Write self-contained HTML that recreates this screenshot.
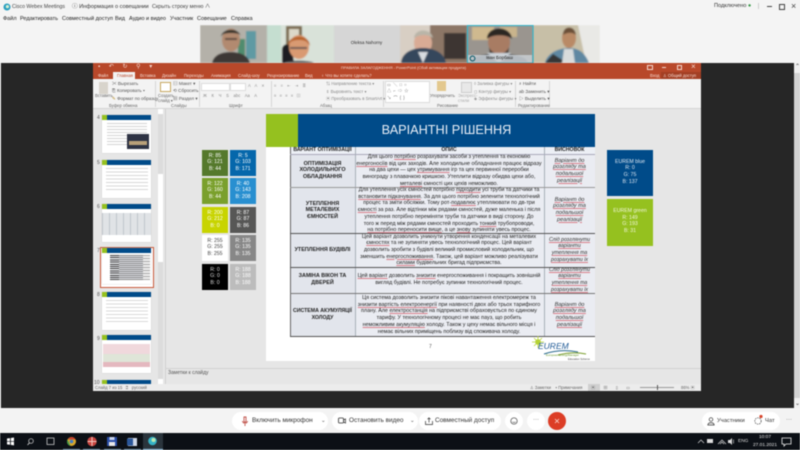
<!DOCTYPE html>
<html lang="ru"><head><meta charset="utf-8"><title>Cisco Webex Meetings</title>
<style>
html,body{margin:0;padding:0;width:800px;height:450px;overflow:hidden;background:#f4f4f4}
#w{position:relative;width:800px;height:450px;overflow:hidden;font-family:"Liberation Sans","Noto Sans CJK SC",sans-serif;filter:blur(.4px);color:#222}
#w div,#w svg{position:absolute}
.t{white-space:nowrap}
.m{white-space:nowrap;top:15px;font-size:5.5px;line-height:8px;color:#222}
.r{font-size:4.2px;color:#fff;white-space:nowrap}
.rb{font-size:4.6px;color:#555;white-space:nowrap}
.rl{font-size:4.2px;color:#666;white-space:nowrap}
.sep{width:1px;top:81px;height:26px;background:#d6d6d6}
.sw{width:26px;height:25.5px;color:#fff;font-size:5.2px;line-height:6.6px;text-align:center;padding-top:0}
.sw span{display:block;margin-top:2.5px}
.c{text-align:center;font-size:5.4px;line-height:6.7px;color:#222;white-space:nowrap}
.c u,.v u{text-decoration:underline;text-decoration-color:#d9808c;text-decoration-thickness:.5px}
.v{text-align:center;font-size:5.6px;line-height:6.7px;font-style:italic;color:#333;white-space:nowrap}
.h{text-align:center;font-size:5.4px;line-height:6.6px;font-weight:bold;color:#222;white-space:nowrap}
.th{background:#fff;width:49px;height:38px;box-shadow:0 0 1px #bbb}
.thn{font-size:5px;color:#555}
.pill{background:#fff;border-radius:10px;height:18px;top:412px}
</style></head><body><div id="w">

<!-- top bar -->
<div style="left:0;top:0;width:800px;height:63px;background:#f4f4f4"></div>
<svg style="left:3px;top:3px" width="8" height="8" viewBox="0 0 10 10"><circle cx="5" cy="5" r="4.4" fill="#2a9fc0"/><circle cx="5.5" cy="4.5" r="2" fill="#d9f0d0"/></svg>
<div class="t" style="left:12px;top:2.5px;font-size:5.2px;color:#444;line-height:8px">Cisco Webex Meetings</div>
<div class="t" style="left:72px;top:2.5px;font-size:5.6px;color:#333;line-height:8px">ⓘ Информация о совещании</div>
<div class="t" style="left:152px;top:2.5px;font-size:5.4px;color:#444;line-height:8px">Скрыть строку меню ∧</div>
<div class="m" style="left:3px">Файл</div>
<div class="m" style="left:20px">Редактировать</div>
<div class="m" style="left:62px">Совместный доступ</div>
<div class="m" style="left:115px">Вид</div>
<div class="m" style="left:129px">Аудио и видео</div>
<div class="m" style="left:170px">Участник</div>
<div class="m" style="left:197px">Совещание</div>
<div class="m" style="left:231px">Справка</div>
<div class="t" style="left:714px;top:2px;font-size:5.6px;color:#333;line-height:8px">Подключено <span style="color:#3a9a4a">●</span></div>
<div style="left:758px;top:3px;width:1px;height:6px;background:#ccc"></div>
<div style="left:767px;top:6px;width:5px;height:1px;background:#444"></div>
<div style="left:779px;top:4px;width:4px;height:4px;border:1px solid #444"></div>
<div class="t" style="left:791px;top:1px;font-size:9px;color:#444;line-height:10px">×</div>

<!-- videos -->
<svg style="left:200px;top:25px" width="400" height="38" viewBox="0 0 400 38">
<defs><filter id="b"><feGaussianBlur stdDeviation="0.8"/></filter></defs>
<g filter="url(#b)">
<rect x="0" width="67" height="38" fill="#b4b1a9"/>
<rect x="46" y="6" width="10" height="28" fill="#5f9aa3"/><rect x="38" y="14" width="7" height="20" fill="#4f8c6e"/>
<ellipse cx="31" cy="15" rx="9" ry="11.5" fill="#b28a70"/><path d="M21 12c0-9 19-10 20 0 0-3-3-4-10-4s-9 1-10 4z" fill="#33302c"/>
<rect x="25" y="13" width="12" height="2" fill="#5b4a40"/>
<path d="M12 38c2-9 11-11 19-11s17 3 19 11z" fill="#3d3835"/>
<rect x="67" width="67" height="38" fill="#d9e2d9"/><rect x="67" width="14" height="38" fill="#c5ded0"/>
<rect x="86" y="1" width="16" height="19" fill="#7a6a50"/><rect x="89" y="4" width="10" height="13" fill="#dcd8c8"/>
<path d="M82 38v-14c1-6 8-6 10-2l2 16z" fill="#1e1e20"/>
<ellipse cx="99" cy="22" rx="10" ry="12" fill="#d99a72"/><path d="M88 21c-1-11 21-14 22 0-3-5-5-6-11-6s-9 1-11 6z" fill="#b8642c"/>
<rect x="90" y="22" width="17" height="2" fill="#6a5a55"/>
<path d="M84 38c2-3 28-3 30 0z" fill="#555"/>
<rect x="134" width="66" height="38" fill="#d6d6d6"/>
<rect x="200" width="67" height="38" fill="#8c7666"/><rect x="200" width="30" height="38" fill="#d8cfc4"/>
<rect x="244" y="8" width="22" height="26" fill="#3e3530"/>
<ellipse cx="223" cy="18" rx="9" ry="11" fill="#d9ab95"/><path d="M214 13c1-10 17-10 19 0-5-4-13-4-19 0z" fill="#b9b5a8"/>
<path d="M201 38c1-12 14-15 22-15s21 3 23 15z" fill="#36465c"/><path d="M218 27l5 11 5-11z" fill="#d8dce0"/>
<rect x="267" width="66" height="38" fill="#9a958f"/><rect x="272" y="2" width="22" height="13" fill="#cfb98f"/><rect x="300" y="2" width="17" height="10" fill="#c9b48c"/>
<ellipse cx="299" cy="17" rx="11" ry="13" fill="#a87b63"/><path d="M287 14c0-14 24-14 25 0-5-5-20-5-25 0z" fill="#2a2622"/><path d="M289 22c3 9 17 9 20 0l-1 8h-18z" fill="#3a2e28"/>
<path d="M270 38c1-7 14-9 29-9s28 2 29 9z" fill="#3c4a58"/><path d="M287 28l12 10 12-10z" fill="#ced5dc"/>
<rect x="333" width="67" height="38" fill="#c7bfa7"/><path d="M378 0h22v38h-14z" fill="#e9e9e6"/>
<ellipse cx="369" cy="13" rx="7" ry="10" fill="#b98a66"/><path d="M363 10c0-10 12-10 13 0-3-3-9-3-13 0z" fill="#6a5038"/>
<path d="M345 38c2-10 14-15 24-15s16 5 20 15z" fill="#5e88a2"/><path d="M345 38l8-9 14 9z" fill="#343434"/><path d="M364 24h9l2 14h-13z" fill="#d8dcdc"/>
</g>
<rect x="267.500" y=".5" width="65.500" height="37" fill="none" stroke="#3bb4c8" stroke-width="1.200"/>
<rect x="268" y="30" width="64" height="7.500" fill="#c9cfd3" opacity=".85"/>
</svg>
<div class="t" style="left:333px;top:40px;width:67px;text-align:center;font-size:4.400px;color:#333;line-height:6px">Oleksa Nahorny</div>
<div class="t" style="left:486px;top:55px;font-size:4.600px;color:#222;line-height:6px">Іван Борбаш</div>
<svg style="left:469px;top:55px" width="8" height="7" viewBox="0 0 8 7"><circle cx="3.500" cy="3.500" r="2.400" fill="none" stroke="#14606e" stroke-width="1.100"/></svg>

<!-- dark share area -->
<div style="left:0;top:63px;width:800px;height:345px;background:#262626"></div>
<div style="left:0;top:63px;width:1px;height:345px;background:#e8e8e8"></div>
<div style="left:794px;top:63px;width:6px;height:345px;background:#2c2c2c"></div>
<div style="left:794px;top:73px;width:6px;height:325px;background:#d2d2d2"></div>
<div style="left:794px;top:63px;width:6px;height:10px;background:#efefef"></div>
<div style="left:794px;top:398px;width:6px;height:10px;background:#efefef"></div>
<div class="t" style="left:795px;top:63px;font-size:6px;color:#444;line-height:8px">⌃</div>
<div class="t" style="left:795px;top:401px;font-size:6px;color:#444;line-height:6px">⌄</div>

<!-- PPT window -->
<div style="left:93px;top:63px;width:608px;height:328px;background:#e6e6e6"></div>
<div style="left:93px;top:63px;width:608px;height:16px;background:#b8482a"></div>
<div class="t" style="left:98px;top:63px;font-size:6px;color:#f3d5cb;line-height:8px;word-spacing:7px">▪ ↶ ↻ ⚲ ▾</div>
<div class="t" style="left:341px;top:63.500px;font-size:3.900px;color:#f3d5cb;line-height:7px">ПРАВИЛА ЗАЛАГОДЖЕННЯ - PowerPoint (Сбой активации продукта)</div>
<div style="left:647px;top:65px;width:4px;height:3px;border:1px solid #f3d5cb"></div>
<div style="left:662px;top:67px;width:4px;height:1px;background:#f3d5cb"></div>
<div style="left:677px;top:65px;width:3px;height:3px;border:1px solid #f3d5cb"></div>
<div class="t" style="left:691px;top:62px;font-size:8px;color:#f3d5cb;line-height:9px">×</div>
<div style="left:661px;top:72px;width:40px;height:7px;background:#a33f24"></div>
<div style="left:113px;top:72px;width:22px;height:8px;background:#f3f3f3"></div>
<div class="t r" style="left:98px;top:72.500px;line-height:6px;color:#f6ddd4">Файл</div>
<div class="t r" style="left:117px;top:72.500px;line-height:6px;color:#b8482a">Главная</div>
<div class="t r" style="left:140px;top:72.500px;line-height:6px;color:#f6ddd4">Вставка</div>
<div class="t r" style="left:162px;top:72.500px;line-height:6px;color:#f6ddd4">Дизайн</div>
<div class="t r" style="left:184px;top:72.500px;line-height:6px;color:#f6ddd4">Переходы</div>
<div class="t r" style="left:211px;top:72.500px;line-height:6px;color:#f6ddd4">Анимация</div>
<div class="t r" style="left:238px;top:72.500px;line-height:6px;color:#f6ddd4">Слайд-шоу</div>
<div class="t r" style="left:267px;top:72.500px;line-height:6px;color:#f6ddd4">Рецензирование</div>
<div class="t r" style="left:305px;top:72.500px;line-height:6px;color:#f6ddd4">Вид</div>
<div class="t r" style="left:321px;top:72.500px;line-height:6px;color:#f6ddd4">♀ Что вы хотите сделать?</div>
<div class="t r" style="left:650px;top:72.500px;line-height:6px;color:#f6ddd4">Вход</div>
<div class="t r" style="left:663px;top:72.500px;line-height:6px;color:#f6ddd4">♙ Общий доступ</div>

<!-- ribbon -->
<div style="left:93px;top:79px;width:608px;height:29px;background:#f3f3f3"></div>
<div style="left:93px;top:108px;width:608px;height:1px;background:#d4d4d4"></div>
<div style="left:155px;" class="sep"></div><div style="left:199px;" class="sep"></div><div style="left:271px;" class="sep"></div><div style="left:383px;" class="sep"></div><div style="left:515px;" class="sep"></div><div style="left:549px;" class="sep"></div>
<div style="left:99px;top:82px;width:9px;height:12px;background:#d8d4cc"></div>
<div class="rl" style="left:95px;top:93px;line-height:5px">Вставить</div>
<div class="rb" style="left:112px;top:81px;line-height:6px">✂ Вырезать</div>
<div class="rb" style="left:112px;top:88px;line-height:6px">⎘ Копировать ▾</div>
<div class="rb" style="left:112px;top:96px;line-height:6px"><span style="color:#b58a20">✎</span> Формат по образцу</div>
<div class="rl" style="left:109px;top:103px;line-height:5px">Буфер обмена</div>
<div style="left:160px;top:82px;width:9px;height:8px;background:#fff;border:1px solid #c9a860"></div>
<div class="rl" style="left:158px;top:93px;line-height:5px">Создать<br>слайд ▾</div>
<div class="rb" style="left:173px;top:81px;line-height:6px">▤ Макет ▾</div>
<div class="rb" style="left:173px;top:88px;line-height:6px">⟲ Сбросить</div>
<div class="rb" style="left:173px;top:96px;line-height:6px">▦ Раздел ▾</div>
<div class="rl" style="left:171px;top:103px;line-height:5px">Слайды</div>
<div style="left:201px;top:82.500px;width:27px;height:6px;background:#fff;border:1px solid #ddd"></div>
<div style="left:230px;top:82.500px;width:14px;height:6px;background:#fff;border:1px solid #ddd"></div>
<div class="rl" style="left:248px;top:83px;line-height:5px;color:#999;word-spacing:3px">A A ✕</div>
<div class="rl" style="left:203px;top:93px;line-height:5px;color:#888;word-spacing:3.500px">Ж К Ч S abc Aa A</div>
<div class="rl" style="left:229px;top:103px;line-height:5px">Шрифт</div>
<div class="rl" style="left:274px;top:83px;line-height:5px;color:#999;word-spacing:3px">≡ ≡ ⇤ ⇥ ≣</div>
<div class="rl" style="left:274px;top:93px;line-height:5px;color:#888;word-spacing:2px">≡ ≡ ≡ ≡ ▥</div>
<div class="rl" style="left:326px;top:81px;line-height:6px;color:#888">⇅ Направление текста ▾</div>
<div class="rl" style="left:326px;top:88.500px;line-height:6px;color:#888">⇕ Выровнять текст ▾</div>
<div class="rl" style="left:326px;top:96px;line-height:6px;color:#888">▣ Преобразовать в SmartArt ▾</div>
<div class="rl" style="left:320px;top:103px;line-height:5px">Абзац</div>
<div style="left:385px;top:81px;width:43px;height:20px;background:#fff;border:1px solid #ddd"></div>
<div class="rl" style="left:387px;top:82px;line-height:6.400px;color:#666;word-spacing:1px">▭ ╲ □ ○<br>△ ⌐ ⇨ ☆<br>↘ ⌒ { }</div>
<div style="left:437px;top:81px;width:9px;height:10px;background:#e3c88e"></div>
<div class="rl" style="left:430px;top:93px;line-height:5px">Упорядочить</div>
<div class="rl" style="left:458px;top:93px;line-height:5px;color:#aaa">Экспресс-<br>стили</div>
<div style="left:461px;top:82px;width:9px;height:9px;background:#e8e8e8;border:1px solid #ccc"></div>
<div class="rl" style="left:474px;top:81px;line-height:6px;color:#888">◊ Заливка фигуры ▾</div>
<div class="rl" style="left:474px;top:88.500px;line-height:6px;color:#888">◻ Контур фигуры ▾</div>
<div class="rl" style="left:474px;top:96px;line-height:6px;color:#888">◈ Эффекты фигуры ▾</div>
<div class="rl" style="left:437px;top:103px;line-height:5px">Рисование</div>
<div class="rb" style="left:519px;top:81px;line-height:6px">⌕ Найти</div>
<div class="rb" style="left:519px;top:88.500px;line-height:6px">ab Заменить ▾</div>
<div class="rb" style="left:519px;top:96px;line-height:6px">▷ Выделить ▾</div>
<div class="rl" style="left:518px;top:103px;line-height:5px">Редактирование</div>

<!-- thumbnail pane -->
<div style="left:93px;top:109px;width:72px;height:275px;background:#e6e6e6"></div>
<div style="left:158px;top:109px;width:5px;height:275px;background:#dcdcdc"></div>
<div style="left:158px;top:174px;width:5px;height:88px;background:#fff"></div>
<div style="left:158px;top:109px;width:5px;height:5px;background:#fff"></div>
<div style="left:158px;top:379px;width:5px;height:5px;background:#fff"></div>
<div style="left:164.500px;top:109px;width:1px;height:275px;background:#d0d0d0"></div>

<div class="thn" style="left:97px;top:115px">4</div>
<div class="th" style="left:102px;top:115px"><div style="left:0;top:0;width:5px;height:5px;background:#95c11f"></div><div style="left:5px;top:0;width:44px;height:5px;background:#004b89"></div><div style="left:5px;top:8px;width:40px;height:24px;background:repeating-linear-gradient(#d4d4d4 0 1px,#fff 1px 3px)"></div><div style="left:25px;top:19px;width:22px;height:15px;background:#2e3344"></div><div style="left:27px;top:26px;width:18px;height:4px;background:#b9a079"></div></div>
<div class="thn" style="left:97px;top:160px">5</div>
<div class="th" style="left:102px;top:160px"><div style="left:0;top:0;width:5px;height:5px;background:#95c11f"></div><div style="left:5px;top:0;width:44px;height:5px;background:#004b89"></div><div style="left:4px;top:8px;width:42px;height:24px;background:repeating-linear-gradient(#d8d8d8 0 1px,#fff 1px 3.500px)"></div></div>
<div class="thn" style="left:97px;top:204px">6</div>
<div class="th" style="left:102px;top:204px"><div style="left:0;top:0;width:5px;height:5px;background:#95c11f"></div><div style="left:5px;top:0;width:44px;height:5px;background:#004b89"></div><div style="left:0;top:9px;width:49px;height:22px;background:repeating-linear-gradient(90deg,#c0c6cc 0 1px,#e0e3e6 1px 7px)"></div></div>
<div class="thn" style="left:97px;top:248px">7</div>
<div style="left:100px;top:246.500px;width:52px;height:39px;border:1px solid #c8593a;background:#fff"></div>
<div class="th" style="left:102px;top:248px;height:36px"><div style="left:0;top:0;width:5px;height:5px;background:#95c11f"></div><div style="left:5px;top:0;width:44px;height:5px;background:#004b89"></div><div style="left:8px;top:7px;width:9px;height:25px;background:repeating-linear-gradient(#444 0 1px,#e4e6ea 1px 2.200px)"></div><div style="left:17px;top:7px;width:24px;height:25px;background:repeating-linear-gradient(#888 0 1px,#dfe2e8 1px 2px)"></div><div style="left:41px;top:7px;width:7px;height:25px;background:repeating-linear-gradient(#aaa 0 1px,#eee 1px 3px)"></div></div>
<div class="thn" style="left:97px;top:292px">8</div>
<div class="th" style="left:102px;top:292px"><div style="left:0;top:0;width:5px;height:5px;background:#95c11f"></div><div style="left:5px;top:0;width:44px;height:5px;background:#004b89"></div><div style="left:4px;top:8px;width:42px;height:22px;background:repeating-linear-gradient(#dadada 0 1px,#fff 1px 3.500px)"></div></div>
<div class="thn" style="left:97px;top:336px">9</div>
<div class="th" style="left:102px;top:335px"><div style="left:0;top:0;width:5px;height:5px;background:#95c11f"></div><div style="left:5px;top:0;width:44px;height:5px;background:#004b89"></div><div style="left:1px;top:9px;width:47px;height:10px;background:#f0d8dc"></div><div style="left:1px;top:19px;width:47px;height:8px;background:#dfe5d8"></div><div style="left:1px;top:27px;width:47px;height:5px;background:#e4b8bf"></div></div>
<div class="thn" style="left:94px;top:380px">10</div>
<div class="th" style="left:102px;top:380px;height:4px"><div style="left:0;top:0;width:5px;height:4px;background:#95c11f"></div><div style="left:5px;top:0;width:44px;height:4px;background:#004b89"></div></div>

<!-- status / notes -->
<div style="left:165px;top:367.500px;width:536px;height:1px;background:#d2d2d2"></div>
<div class="t" style="left:168px;top:370px;font-size:5px;color:#555;line-height:6px">Заметки к слайду</div>
<div style="left:93px;top:384px;width:608px;height:7px;background:#ececec"></div>
<div class="rl" style="left:95px;top:384.500px;line-height:6px">Слайд 7 из 15 &nbsp; ⍰ &nbsp; русский</div>
<div class="rl" style="left:530px;top:384.500px;line-height:6px">♙ Заметки &nbsp;&nbsp; ▪ Примечания</div>
<div style="left:588px;top:384px;width:12px;height:7px;background:#cfcfcf"></div>
<div class="rl" style="left:591px;top:384.500px;line-height:6px;word-spacing:7px">▣ ▦ ▯ ▭</div>
<div style="left:640px;top:387px;width:34px;height:1px;background:#999"></div>
<div style="left:657px;top:385px;width:1px;height:5px;background:#555"></div>
<div class="rl" style="left:681px;top:384.500px;line-height:6px">86% ▣</div>

<!-- slide -->
<div style="left:266px;top:114px;width:329px;height:247px;background:#fff"></div>
<div style="left:266px;top:114px;width:32px;height:33px;background:#95c11f"></div>
<div style="left:298px;top:114px;width:297px;height:33px;background:#004b89"></div>
<div class="t" style="left:298px;top:122px;width:297px;text-align:center;color:#e8eef6;font-size:12.700px;line-height:16px">ВАРІАНТНІ РІШЕННЯ</div>

<!-- table -->
<div style="left:290px;top:147px;width:65px;height:189px;background:#e2e5ec"></div>
<div style="left:355px;top:147px;width:240px;height:189px;background:#eaecf2"></div>
<div style="left:290px;top:147px;width:305px;height:7px;background:#eceff5"></div>
<div style="left:290px;top:147px;width:1px;height:189px;background:#666"></div>
<div style="left:355px;top:147px;width:1px;height:189px;background:#a8b0b8"></div>
<div style="left:543.500px;top:147px;width:1px;height:189px;background:#a8b0b8"></div>
<div style="left:290px;top:153.500px;width:305px;height:1px;background:#aab"></div>
<div style="left:290px;top:186.500px;width:305px;height:1px;background:#999"></div>
<div style="left:290px;top:232.500px;width:305px;height:1px;background:#555"></div>
<div style="left:290px;top:266.500px;width:305px;height:1px;background:#555"></div>
<div style="left:290px;top:293px;width:305px;height:1px;background:#777"></div>
<div style="left:290px;top:335.500px;width:305px;height:1px;background:#555"></div>

<div class="h" style="left:290px;top:147px;width:65px;line-height:7px;font-size:5.200px">ВАРІАНТ ОПТИМІЗАЦІЇ</div>
<div class="h" style="left:355px;top:147px;width:188px;line-height:7px;font-size:5.200px">ОПИС</div>
<div class="h" style="left:544px;top:147px;width:51px;line-height:7px;font-size:5.200px">ВИСНОВОК</div>

<div class="h" style="left:290px;top:160.500px;width:65px">ОПТИМІЗАЦІЯ<br>ХОЛОДИЛЬНОГО<br>ОБЛАДНАННЯ</div>
<div class="h" style="left:290px;top:200.500px;width:65px">УТЕПЛЕННЯ<br>МЕТАЛЕВИХ<br>ЄМНОСТЕЙ</div>
<div class="h" style="left:290px;top:246.500px;width:65px">УТЕПЛЕННЯ БУДІВЛІ</div>
<div class="h" style="left:290px;top:273px;width:65px">ЗАМІНА ВІКОН ТА<br>ДВЕРЕЙ</div>
<div class="h" style="left:290px;top:308px;width:65px;font-size:5.200px">СИСТЕМА АКУМУЛЯЦІЇ<br>ХОЛОДУ</div>

<div class="c" style="left:355px;top:154px;width:188px">Для цього <u>потрібно</u> розрахувати засоби з утеплення та економію<br><u>енергоносіїв</u> від цих заходів. Але холодильне обладнання працює відразу<br>на два цехи — цех <u>утримування</u> ігр та цех первинної переробки<br>винограду з плавачкою кришкою. Утеплити відразу обидва цехи або,<br><u>металеві</u> ємності цих цехів неможливо.</div>
<div class="c" style="left:355px;top:187px;width:188px">Для утеплення усіх ємностей потрібно <u>підходити</u> усі труби та датчики та<br><u>встановити підкачування</u>. За для цього потрібно зеленити технологічний<br>процес та зміти обсяжки. Тому рот-<u>подавлює</u> утепляювати по дв-три<br><u>ємності</u> за раз. Але відтінки між рядами ємностей, дуже маленька і після<br>утеплення потрібно переміняти труби та датчики в виді сторону. До<br>того ж перед між рядами ємностей проходить <u>тонкий</u> трубопроводи,<br><u>на потрібно переносити вище</u>, а це <u>знову</u> зупиняти увесь процес.</div>
<div class="c" style="left:355px;top:233.500px;width:188px">Цей варіант дозволить уникнути утворення конденсації на металевих<br><u>ємностях</u> та не зупиняти увесь технологічний процес. Цей варіант<br>дозволить зробити з будівлі великий промисловий холодильник, що<br>зменшить <u>енергоспоживання</u>. Також, цей варіант можливо реалізувати<br><u>силами</u> будівельних бригад підприємства.</div>
<div class="c" style="left:355px;top:273px;width:188px"><u>Цей варіант</u> дозволить <u>знизити</u> енергоспоживання і покращить зовнішній<br>вигляд будівлі. Не потребує зупинки технологічний процес.</div>
<div class="c" style="left:355px;top:295px;width:188px">Ця система дозволить знизити пікові навантаження електромереж та<br><u>знизити вартість електроенергії</u> при наявності двох або трьох тарифного<br>плану. Але <u>електростанція</u> на підприємстві обраховується по єдиному<br>тарифу. У технологічному процесі не має пауз, що робить<br><u>неможливим акумуляцію</u> холоду. Також у цеху немає вільного місця і<br>немає вільних приміщень поблизу від споживача холоду.</div>

<div class="v" style="left:544px;top:157.500px;width:51px"><u>Варіант до</u><br><u>розгляду та</u><br><u>подальшої</u><br><u>реалізації</u></div>
<div class="v" style="left:544px;top:196.500px;width:51px"><u>Варіант до</u><br><u>розгляду та</u><br><u>подальшої</u><br><u>реалізації</u></div>
<div class="v" style="left:544px;top:236.700px;width:51px;font-size:5.200px"><u>Слід розглянути</u><br><u>варіанти</u><br><u>утеплення та</u><br><u>розрахувати їх</u></div>
<div class="v" style="left:544px;top:266.700px;width:51px;font-size:5.200px"><u>Слід розглянути</u><br><u>варіанти</u><br><u>утеплення та</u><br><u>розрахувати їх</u></div>
<div class="v" style="left:544px;top:301.700px;width:51px"><u>Варіант до</u><br><u>розгляду та</u><br><u>подальшої</u><br><u>реалізації</u></div>

<div class="t" style="left:429px;top:344px;font-size:5px;color:#555;line-height:6px">7</div>
<!-- logo -->
<svg style="left:532px;top:336px" width="62" height="25" viewBox="0 0 62 25">
<circle cx="6" cy="6" r="2.800" fill="#b6d334"/>
<path d="M6 0v12M0 6h12M2 2l8 8M10 2l-8 8" stroke="#b6d334" stroke-width=".8"/>
<path d="M12 18c12-4 24-4 34-2" fill="none" stroke="#2a6a8e" stroke-width="1"/>
<path d="M26 19c8-2 18-3 28-1" fill="none" stroke="#7a9e2c" stroke-width="1"/>
<text x="6" y="13" font-family="Liberation Sans" font-size="8.500" font-style="italic" fill="#1f5a96">EUREM</text>
<text x="14" y="20" font-family="Liberation Sans" font-size="2.800" fill="#6a9a2e">European EnergyManager</text>
<text x="36" y="24" font-family="Liberation Sans" font-size="2.600" fill="#444">Education Scheme</text>
</svg>

<!-- swatches -->
<div class="sw" style="left:202px;top:150px;background:#55792c"><span>R: 85<br>G: 121<br>B: 44</span></div>
<div class="sw" style="left:230px;top:150px;background:#0567ab"><span>R: 5<br>G: 103<br>B: 171</span></div>
<div class="sw" style="left:202px;top:178px;background:#7aa02c"><span>R: 122<br>G: 160<br>B: 44</span></div>
<div class="sw" style="left:230px;top:178px;background:#288fd0"><span>R: 40<br>G: 143<br>B: 208</span></div>
<div class="sw" style="left:202px;top:207px;background:#c8d400"><span>R: 200<br>G: 212<br>B: 0</span></div>
<div class="sw" style="left:230px;top:207px;background:#575756"><span>R: 87<br>G: 87<br>B: 86</span></div>
<div class="sw" style="left:202px;top:235px;background:#fff;color:#444"><span>R: 255<br>G: 255<br>B: 255</span></div>
<div class="sw" style="left:230px;top:235px;background:#878787"><span>R: 135<br>G: 135<br>B: 135</span></div>
<div class="sw" style="left:202px;top:264px;background:#000;color:#ddd"><span>R: 0<br>G: 0<br>B: 0</span></div>
<div class="sw" style="left:230px;top:264px;background:#bcbcbc"><span>R: 188<br>G: 188<br>B: 188</span></div>

<div style="left:607px;top:150px;width:46px;height:46px;background:#004b89;color:#dfe8f2;font-size:5.200px;line-height:6.700px;text-align:center"><span style="display:block;margin-top:8.500px">EUREM blue<br>R: 0<br>G: 75<br>B: 137</span></div>
<div style="left:607px;top:199px;width:46px;height:47px;background:#95c11f;color:#f2f7dc;font-size:5.200px;line-height:6.700px;text-align:center"><span style="display:block;margin-top:9px">EUREM green<br>R: 149<br>G: 193<br>B: 31</span></div>

<!-- bottom control bar -->
<div style="left:0;top:408px;width:800px;height:25px;background:#f3f3f3"></div>
<div class="pill" style="left:232px;width:96px"></div>
<svg style="left:241px;top:416px" width="8" height="10" viewBox="0 0 8 10"><path d="M3 1h2v5H3zM1.500 5c0 3 5 3 5 0M4 8v2" fill="none" stroke="#c0524a" stroke-width=".9"/></svg>
<div class="t" style="left:252px;top:417px;font-size:6.400px;color:#333;line-height:8px">Включить микрофон</div>
<div class="t" style="left:321px;top:417px;font-size:5.600px;color:#555;line-height:8px">⌄</div>
<div class="pill" style="left:332px;width:86px"></div>
<svg style="left:338px;top:417px" width="8" height="8" viewBox="0 0 8 8"><rect x=".5" y="1" width="5" height="5" rx="1" fill="none" stroke="#333" stroke-width=".8"/><path d="M5.500 3l2-1v4l-2-1" fill="none" stroke="#333" stroke-width=".7"/></svg>
<div class="t" style="left:349px;top:417px;font-size:6.400px;color:#333;line-height:8px">Остановить видео</div>
<div class="t" style="left:410px;top:417px;font-size:5.600px;color:#555;line-height:8px">⌄</div>
<div class="pill" style="left:419px;width:82px"></div>
<svg style="left:425px;top:417px" width="8" height="8" viewBox="0 0 8 8"><path d="M.5 4v3.500h7V4M4 5.500V.8M2.500 2.200L4 .8l1.500 1.400" fill="none" stroke="#333" stroke-width=".7"/></svg>
<div class="t" style="left:435px;top:417px;font-size:6.400px;color:#333;line-height:8px">Совместный доступ</div>
<div class="pill" style="left:505px;width:18px"></div>
<svg style="left:510px;top:417px" width="8" height="8" viewBox="0 0 8 8"><circle cx="4" cy="4" r="3.200" fill="none" stroke="#444" stroke-width=".7"/><path d="M2.500 4.800c.8 1 2.200 1 3 0" fill="none" stroke="#444" stroke-width=".6"/></svg>
<div class="pill" style="left:527px;width:18px"></div>
<div class="t" style="left:527px;top:417px;width:18px;text-align:center;font-size:6px;color:#666;line-height:7px">···</div>
<svg style="left:548px;top:412px" width="18" height="18" viewBox="0 0 18 18"><circle cx="9" cy="9" r="9" fill="#dc3d26"/><path d="M7 7l4 4M11 7l-4 4" stroke="#fbd9d2" stroke-width=".8"/></svg>
<div class="pill" style="left:702px;width:78px"></div>
<svg style="left:707px;top:417px" width="9" height="9" viewBox="0 0 9 9"><circle cx="4" cy="2.500" r="1.800" fill="none" stroke="#333" stroke-width=".7"/><path d="M.8 8c.3-3 6-3 6.400 0z" fill="none" stroke="#333" stroke-width=".7"/></svg>
<div class="t" style="left:717px;top:417px;font-size:5.800px;color:#333;line-height:8px">Участники</div>
<svg style="left:753px;top:414px" width="11" height="12" viewBox="0 0 11 12"><circle cx="5" cy="7" r="3.200" fill="none" stroke="#444" stroke-width=".7" stroke-dasharray="1.500 .8"/><circle cx="8" cy="2.500" r="1.600" fill="#d8432a"/></svg>
<div class="t" style="left:765px;top:417px;font-size:5.800px;color:#333;line-height:8px">Чат</div>
<div class="t" style="left:780px;top:417px;width:18px;text-align:center;font-size:6px;color:#666;line-height:7px">···</div>

<!-- taskbar -->
<div style="left:0;top:433px;width:800px;height:17px;background:#0c1016"></div>
<svg style="left:0;top:433px" width="170" height="17" viewBox="0 0 170 17">
<path d="M7 5.500l3-.4v3H7zM10.800 5l3.200-.5v3.600h-3.200zM7 8.800h3v3l-3-.4zM10.800 8.800H14v3.600l-3.200-.5z" fill="#fff"/>
<circle cx="31" cy="8" r="2.300" fill="none" stroke="#ddd" stroke-width=".7"/><path d="M29.500 9.800l-2 2.200" stroke="#ddd" stroke-width=".8"/>
<rect x="47" y="5" width="7" height="6.500" fill="none" stroke="#ddd" stroke-width=".7"/>
<circle cx="71.500" cy="8.500" r="4.500" fill="#d8a82c"/><path d="M71.500 4a4.500 4.500 0 0 1 4 2.500h-4l-3.500 0a4.500 4.500 0 0 1 3.500-2.500z" fill="#c9432f"/><path d="M67.500 6.500a4.500 4.500 0 0 0 3 6.500z" fill="#3f9a4b"/><circle cx="71.500" cy="8.500" r="1.800" fill="#3f7dc6"/>
<circle cx="92" cy="8.500" r="4.700" fill="#c8443f"/><path d="M92 4v9M87.500 8.500h9" stroke="#f0c8c0" stroke-width="1"/>
<rect x="107" y="4" width="10" height="9" fill="#2b4fa8"/><rect x="109" y="9" width="6" height="4" fill="#e9e9e9"/><rect x="109.500" y="4" width="5" height="3" fill="#c9d4ee"/>
<rect x="128" y="5" width="9" height="8" fill="#cfd8e8"/><rect x="127" y="5.500" width="6" height="7" fill="#2b579a"/>
<rect x="143" y="0" width="20" height="17" fill="#2a343c"/>
<circle cx="152.500" cy="8" r="4.300" fill="#35b3c7"/><circle cx="153.500" cy="7" r="2" fill="#bfe8b0"/>
<rect x="63" y="15.800" width="17" height="1.200" fill="#7aa4c0" opacity=".7"/><rect x="83" y="15.800" width="17" height="1.200" fill="#7aa4c0" opacity=".7"/><rect x="104" y="15.800" width="17" height="1.200" fill="#7aa4c0" opacity=".7"/><rect x="124" y="15.800" width="17" height="1.200" fill="#7aa4c0" opacity=".7"/><rect x="143" y="15.800" width="20" height="1.200" fill="#7aa4c0"/>
</svg>
<svg style="left:695px;top:433px" width="105" height="17" viewBox="0 0 105 17">
<path d="M3 10l3-3 3 3" fill="none" stroke="#ddd" stroke-width=".7"/>
<rect x="12" y="6" width="6" height="4" fill="#ddd"/>
<path d="M23 11l4-4 4 4M25 11l2-2 2 2" fill="none" stroke="#ddd" stroke-width=".7"/>
<path d="M33 7h2l2-2v7l-2-2h-2z" fill="#ddd"/><path d="M38.500 6.500v4" stroke="#ddd" stroke-width=".6"/>
<path d="M87 5h9v6h-5l-2 2v-2h-2z" fill="none" stroke="#eee" stroke-width=".8"/>
</svg>
<div class="t" style="left:738px;top:438.500px;font-size:4.800px;color:#ddd;line-height:6px">ENG</div>
<div class="t" style="left:752px;top:434px;width:40px;text-align:center;font-size:4.800px;color:#e4e4e4;line-height:8px;margin-left:-7px">10:07<br>27.01.2021</div>

</div></body></html>
